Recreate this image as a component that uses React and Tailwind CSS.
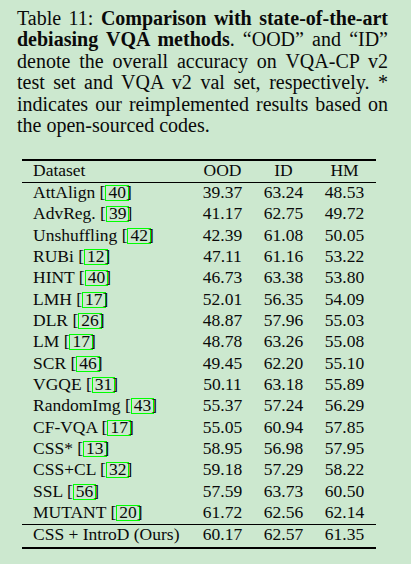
const rows = [
  ["AttAlign", "40", "39.37", "63.24", "48.53"],
  ["AdvReg.", "39", "41.17", "62.75", "49.72"],
  ["Unshuffling", "42", "42.39", "61.08", "50.05"],
  ["RUBi", "12", "47.11", "61.16", "53.22"],
  ["HINT", "40", "46.73", "63.38", "53.80"],
  ["LMH", "17", "52.01", "56.35", "54.09"],
  ["DLR", "26", "48.87", "57.96", "55.03"],
  ["LM", "17", "48.78", "63.26", "55.08"],
  ["SCR", "46", "49.45", "62.20", "55.10"],
  ["VGQE", "31", "50.11", "63.18", "55.89"],
  ["RandomImg", "43", "55.37", "57.24", "56.29"],
  ["CF-VQA", "17", "55.05", "60.94", "57.85"],
  ["CSS*", "13", "58.95", "56.98", "57.95"],
  ["CSS+CL", "32", "59.18", "57.29", "58.22"],
  ["SSL", "56", "57.59", "63.73", "60.50"],
  ["MUTANT", "20", "61.72", "62.56", "62.14"],
];

const Cite = ({ n }) => (
  <>
    [
    <span className="inline-block h-[16px] border border-[#00ff00] px-[2px] leading-[12px] mr-[-3px]">
      {n}
    </span>
    ]
  </>
);

const Row = ({ name, cite, ood, id, hm, height = "h-[21.33px]" }) => (
  <div className={`flex ${height} leading-[18px]`}>
    <div className="w-[170px] pl-[11px] whitespace-nowrap">
      {name} {cite && <Cite n={cite} />}
    </div>
    <div className="w-[61px] text-center">{ood}</div>
    <div className="w-[61px] text-center">{id}</div>
    <div className="w-[61px] text-center">{hm}</div>
  </div>
);

const lineCls = "text-justify [text-align-last:justify] whitespace-nowrap";

export default function App() {
  return (
    <div
      className="min-h-screen bg-[#cce8cf] text-[#0a0a0a]"
      style={{ fontFamily: '"Liberation Serif", "Times New Roman", serif' }}
    >
      <div className="w-[371px] ml-[17px] pt-[7.5px] text-[20px] leading-[21.6px]">
        <div className={lineCls}>
          Table 11: <b>Comparison with state-of-the-art</b>
        </div>
        <div className={lineCls}>
          <b>debiasing VQA methods</b>. “OOD” and “ID”
        </div>
        <div className={lineCls}>denote the overall accuracy on VQA-CP v2</div>
        <div className={lineCls}>test set and VQA v2 val set, respectively. *</div>
        <div className={lineCls}>indicates our reimplemented results based on</div>
        <div>the open-sourced codes.</div>
      </div>

      <div className="w-[354px] ml-[22px] mt-[22px] text-[17.5px]">
        <div className="border-t-2 border-black" />
        <Row name="Dataset" ood="OOD" id="ID" hm="HM" height="h-[21px]" />
        <div className="border-t border-black" />
        {rows.map((r) => (
          <Row key={r[0]} name={r[0]} cite={r[1]} ood={r[2]} id={r[3]} hm={r[4]} />
        ))}
        <div className="border-t border-black" />
        <Row name="CSS + IntroD (Ours)" ood="60.17" id="62.57" hm="61.35" height="h-[22px]" />
        <div className="border-t-2 border-black" />
      </div>
    </div>
  );
}
